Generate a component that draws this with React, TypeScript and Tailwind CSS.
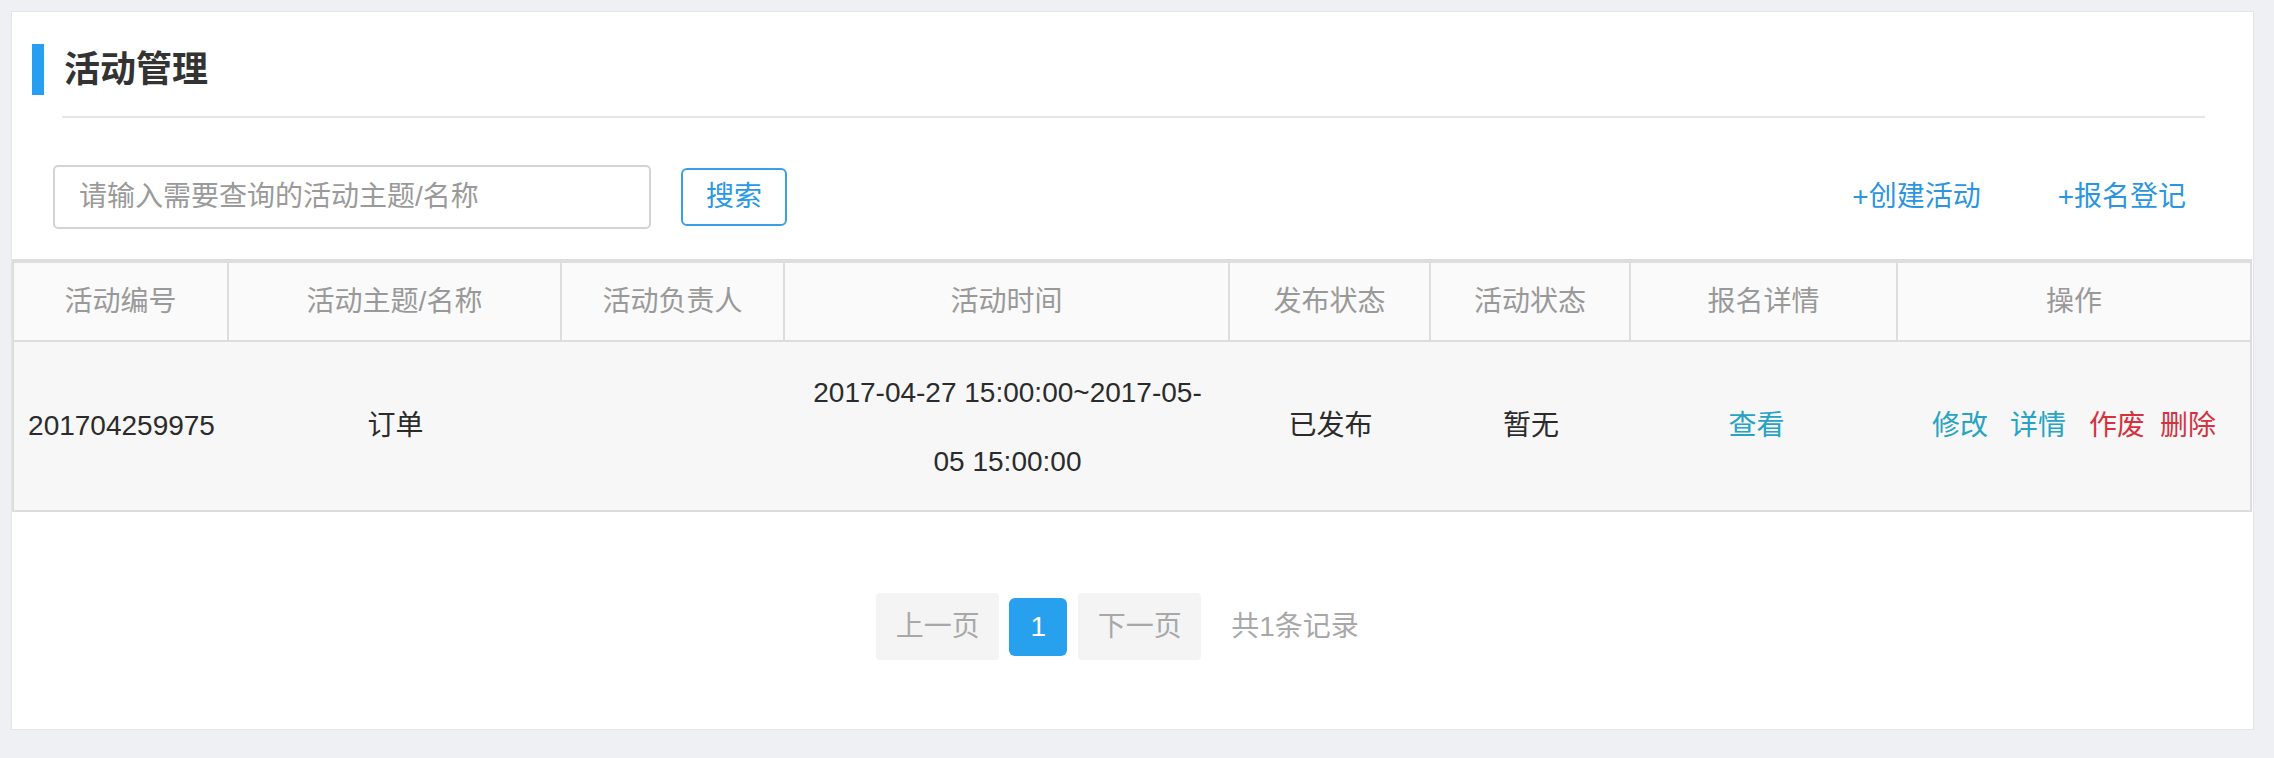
import React from "react";

const font = { fontFamily: '"Liberation Sans", "Noto Sans CJK SC", sans-serif' };

export default function App() {
  const headers = ["活动编号", "活动主题/名称", "活动负责人", "活动时间", "发布状态", "活动状态", "报名详情", "操作"];
  return (
    <div
      className="w-[2274px] h-[758px] bg-[#eef0f3] pt-[11px] pl-[11px] pr-[20px] pb-[28px] font-['Liberation_Sans','Noto_Sans_CJK_SC',sans-serif]"
      style={font}
    >
      <div className="h-[719px] bg-white border border-[#e2e5e9] flex flex-col">
        {/* title */}
        <div className="pt-[32px] pl-[20px] flex items-center">
          <div className="w-[12px] h-[51px] bg-[#279ef0]" />
          <div className="ml-[20px] text-[36px] leading-[51px] font-bold text-[#333333]">活动管理</div>
        </div>
        <div className="mt-[21px] ml-[50px] mr-[48px] h-[2px] bg-[#e6e6e6]" />

        {/* toolbar */}
        <div className="mt-[47px] pl-[41px] pr-[67px] flex items-center h-[64px]">
          <div className="w-[598px] h-[64px] border-2 border-[#d2d4d6] rounded-[5px] flex items-center pl-[24px] text-[28px] text-[#9a9a9a]">
            请输入需要查询的活动主题/名称
          </div>
          <div className="ml-[30px] w-[106px] h-[58px] border-2 border-[#3a9fe4] rounded-[6px] flex items-center justify-center text-[28px] text-[#2a98e4]">
            搜索
          </div>
          <div className="ml-auto flex items-center gap-[77px] text-[28px] text-[#2b95e0]">
            <span>+创建活动</span>
            <span>+报名登记</span>
          </div>
        </div>

        {/* table */}
        <div className="mt-[30px] mr-[1px] border-t-4 border-b-2 border-x-2 border-[#dddddd]">
          <div className="grid grid-cols-[215px_333px_223px_445px_201px_200px_267px_1fr] h-[79px] bg-[#fafafa] border-b-2 border-[#dddddd]">
            {headers.map((h, i) => (
              <div
                key={h}
                className={
                  "flex items-center justify-center text-[28px] text-[#999999] " +
                  (i < headers.length - 1 ? "border-r-2 border-[#dddddd]" : "")
                }
              >
                {h}
              </div>
            ))}
          </div>
          <div className="grid grid-cols-[215px_333px_223px_445px_201px_200px_267px_1fr] h-[168px] bg-[#f7f7f7] text-[28px] text-[#2b2b2b]">
            <div className="flex items-center justify-center">201704259975</div>
            <div className="flex items-center justify-center">订单</div>
            <div className="flex items-center justify-center"></div>
            <div className="flex flex-col items-center justify-center leading-[69px] pt-[2px]">
              <span>2017-04-27 15:00:00~2017-05-</span>
              <span>05 15:00:00</span>
            </div>
            <div className="flex items-center justify-center">已发布</div>
            <div className="flex items-center justify-center">暂无</div>
            <div className="flex items-center justify-center pr-[16px] text-[#27a3c3]">查看</div>
            <div className="flex items-center justify-center">
              <span className="text-[#27a3c3]">修改</span>
              <span className="ml-[22px] text-[#27a3c3]">详情</span>
              <span className="ml-[23px] text-[#d5323f]">作废</span>
              <span className="ml-[15px] text-[#d5323f]">删除</span>
            </div>
          </div>
        </div>

        {/* pagination */}
        <div className="mt-[81px] flex items-center justify-center pr-[30px] text-[28px]">
          <div className="w-[123px] h-[67px] bg-[#f4f4f5] rounded-[4px] flex items-center justify-center text-[#a8a8a8]">上一页</div>
          <div className="ml-[10px] w-[58px] h-[58px] bg-[#27a0ee] rounded-[6px] flex items-center justify-center text-white">1</div>
          <div className="ml-[11px] w-[123px] h-[67px] bg-[#f4f4f5] rounded-[4px] flex items-center justify-center text-[#a8a8a8]">下一页</div>
          <div className="ml-[30px] text-[#a8a8a8]">共1条记录</div>
        </div>
      </div>
    </div>
  );
}
